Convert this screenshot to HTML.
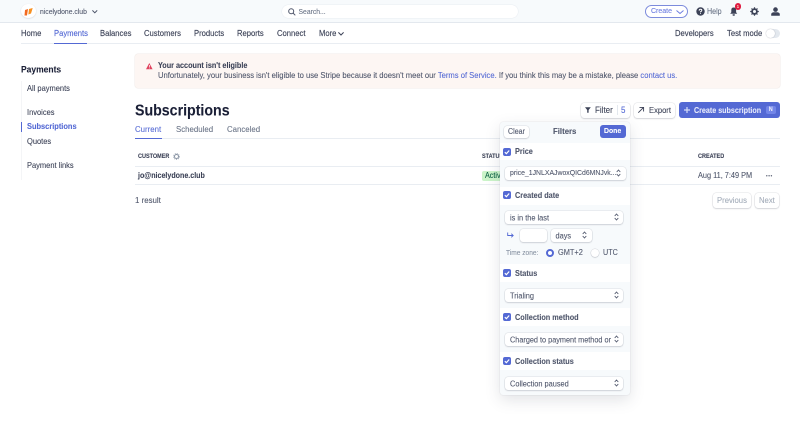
<!DOCTYPE html>
<html><head><meta charset="utf-8"><style>
html,body{margin:0;padding:0;width:800px;height:447px;overflow:hidden;background:#fff}
body{font-family:"Liberation Sans",sans-serif;color:#3c4257;position:relative;font-size:7.6px;filter:blur(.3px)}
.t{position:absolute;white-space:nowrap;line-height:12px;height:12px;transform:scaleY(1.1);-webkit-text-stroke:.08px currentColor}
.n{font-size:7.65px;top:28px;-webkit-text-stroke:.12px currentColor}
.b{position:absolute;box-sizing:border-box}
.btn{position:absolute;box-sizing:border-box;background:#fff;border-radius:3px;box-shadow:0 0 0 .5px rgba(60,66,87,.14),0 1px 1.5px rgba(60,66,87,.16)}
.sel{position:absolute;box-sizing:border-box;background:#fff;border-radius:3px;box-shadow:0 0 0 .5px rgba(60,66,87,.14),0 1px 1.5px rgba(60,66,87,.16);font-size:7.4px;line-height:13px;padding-left:5px;height:13px;white-space:nowrap;overflow:hidden;color:#4f566b}
.sel span{display:inline-block;transform:scaleY(1.1);-webkit-text-stroke:.08px currentColor}
.cb{position:absolute;left:503px;width:8px;height:8px;background:#5469d4;border-radius:2px}
.l{left:515px;font-size:7.3px;font-weight:bold;color:#4f566b}
svg{position:absolute;overflow:visible}
</style></head><body>
<div class="b" style="left:0;top:0;width:800px;height:23px;background:#f7fafc;border-bottom:1px solid #e3e8ee"></div>
<div class="b" style="left:21px;top:4px;width:15px;height:14px;border-radius:50%;background:#fff;box-shadow:0 .5px 1.5px rgba(60,66,87,.2)"></div>
<svg style="left:24px;top:7.5px" width="9" height="8"><path d="M1 2L4 1L3 7.5L.5 7.5Z" fill="#f26a21"/><path d="M5 1L8.7 0L7 5.5L4.3 6.5Z" fill="#f79020"/></svg>
<div class="t" style="left:40px;top:6.5px;font-size:6.8px;color:#4f566b">nicelydone.club</div>
<svg style="left:92px;top:10px" width="6" height="4"><path d="M.4.4L2.8 2.8L5.2.4" fill="none" stroke="#4f566b" stroke-width="1"/></svg>
<div class="b" style="left:282px;top:5px;width:236px;height:13px;background:#fff;border-radius:7px;box-shadow:0 0 0 .5px #e9edf2"></div>
<svg style="left:288px;top:8px" width="8" height="8"><circle cx="3.2" cy="3.2" r="2.5" fill="none" stroke="#4f566b" stroke-width="1"/><path d="M5 5L7.3 7.3" stroke="#4f566b" stroke-width="1"/></svg>
<div class="t" style="left:298.5px;top:6.5px;font-size:6.8px;color:#697386">Search...</div>
<div class="b" style="left:645px;top:5px;width:43px;height:13px;border-radius:7px;background:#fff;border:1px solid #7c8bdc"></div>
<div class="t" style="left:651px;top:6px;font-size:7px;color:#6b7ce0">Create</div>
<svg style="left:676px;top:10px" width="8" height="5"><path d="M.5.5L4 3.5L7.5.5" fill="none" stroke="#6b7ce0" stroke-width="1"/></svg>
<svg style="left:696px;top:7px" width="9" height="9"><circle cx="4.5" cy="4.5" r="4.2" fill="#3c4257"/><path d="M3.2 3.6Q3.2 2.3 4.5 2.3Q5.8 2.3 5.8 3.4Q5.8 4.2 4.5 4.8V5.4M4.5 6.2V7" fill="none" stroke="#fff" stroke-width="1"/></svg>
<div class="t" style="left:707px;top:6px;font-size:7.1px;color:#697386">Help</div>
<svg style="left:730px;top:7px" width="8" height="9"><path d="M3.7 .5Q1.3.5 1.3 3V5.2L.2 6.7H7.2L6.1 5.2V3Q6.1.5 3.7.5Z" fill="#3c4257"/><rect x="2.5" y="7.2" width="2.4" height="1.5" rx=".7" fill="#3c4257"/></svg>
<div class="b" style="left:734.5px;top:3.3px;width:6.7px;height:6.7px;border-radius:50%;background:#df1b41"></div>
<div class="t" style="left:736.8px;top:.7px;font-size:4.2px;color:#ffd">1</div>
<svg style="left:750px;top:7px" width="9" height="9"><circle cx="4.5" cy="4.5" r="2.4" fill="none" stroke="#3c4257" stroke-width="1.8"/><path d="M4.5 .2V1.8M4.5 7.2V8.8M.2 4.5H1.8M7.2 4.5H8.8M1.5 1.5L2.6 2.6M6.4 6.4L7.5 7.5M7.5 1.5L6.4 2.6M2.6 6.4L1.5 7.5" stroke="#3c4257" stroke-width="1.2"/></svg>
<svg style="left:770.5px;top:7px" width="9" height="9"><circle cx="4.5" cy="2.6" r="2.3" fill="#3c4257"/><path d="M.2 8.7V7.2Q.2 5.8 2.6 5.3H6.4Q8.8 5.8 8.8 7.2V8.7Z" fill="#3c4257"/></svg>

<div class="b" style="left:21px;top:43px;width:759px;height:1px;background:#e9edf2"></div>
<div class="t n" style="left:21px">Home</div>
<div class="t n" style="left:54px;color:#5469d4">Payments</div>
<div class="b" style="left:54px;top:43px;width:33px;height:1px;background:#5469d4"></div>
<div class="t n" style="left:100px">Balances</div>
<div class="t n" style="left:144px">Customers</div>
<div class="t n" style="left:194px">Products</div>
<div class="t n" style="left:237px">Reports</div>
<div class="t n" style="left:277px">Connect</div>
<div class="t n" style="left:319px">More</div>
<svg style="left:338px;top:32px" width="6" height="4"><path d="M.4.4L3 3L5.6.4" fill="none" stroke="#3c4257" stroke-width="1"/></svg>
<div class="t n" style="left:675px">Developers</div>
<div class="t n" style="left:727px">Test mode</div>
<div class="b" style="left:766px;top:29px;width:14px;height:9px;border-radius:5px;background:#e3e8ee"></div>
<div class="b" style="left:766px;top:29px;width:9px;height:9px;border-radius:50%;background:#fff;box-shadow:0 0 1px rgba(60,66,87,.5)"></div>

<div class="b" style="left:135px;top:54px;width:645px;height:34px;background:#fdf6f3;border-radius:3px;box-shadow:0 0 0 .5px #f0ebe8"></div>
<svg style="left:145.5px;top:63px" width="7" height="6.5"><path d="M3.3 0L6.6 6.3H0Z" fill="#e0445f"/><rect x="3" y="2" width=".7" height="2.2" fill="#fff"/><rect x="3" y="4.7" width=".7" height=".7" fill="#fff"/></svg>
<div class="t" style="left:158px;top:60px;font-size:7.25px;font-weight:bold;color:#3c4257">Your account isn't eligible</div>
<div class="t" style="left:158px;top:70px;font-size:7.63px;color:#4f566b">Unfortunately, your business isn't eligible to use Stripe because it doesn't meet our <span style="color:#5469d4">Terms of Service.</span> If you think this may be a mistake, please <span style="color:#5469d4">contact us.</span></div>

<div class="t" style="left:21px;top:63px;font-size:8.5px;font-weight:bold;color:#1a1f36">Payments</div>
<div class="b" style="left:21px;top:81px;width:1px;height:99px;background:#f4f5f7"></div>
<div class="t" style="left:27px;top:83px;font-size:7.5px">All payments</div>
<div class="t" style="left:27px;top:107px;font-size:7.5px">Invoices</div>
<div class="b" style="left:21px;top:122px;width:1px;height:10px;background:#5469d4"></div>
<div class="t" style="left:27px;top:121px;font-size:7.45px;font-weight:bold;color:#5469d4">Subscriptions</div>
<div class="t" style="left:27px;top:136px;font-size:7.5px">Quotes</div>
<div class="t" style="left:27px;top:160px;font-size:7.5px">Payment links</div>

<div class="t" style="left:135px;top:104.5px;font-size:14.2px;font-weight:bold;color:#1a1f36">Subscriptions</div>
<div class="t" style="left:135px;top:124px;font-size:7.85px;color:#5469d4">Current</div>
<div class="t" style="left:176px;top:124px;font-size:7.85px;color:#697386">Scheduled</div>
<div class="t" style="left:227px;top:124px;font-size:7.85px;color:#697386">Canceled</div>
<div class="b" style="left:135px;top:138px;width:645px;height:1px;background:#e9edf2"></div>
<div class="b" style="left:135px;top:138px;width:27px;height:1px;background:#5469d4"></div>
<div class="t" style="left:138px;top:151px;font-size:5.5px;font-weight:bold;color:#3c4257">CUSTOMER</div>
<svg style="left:173px;top:153px" width="7" height="7"><circle cx="3.5" cy="3.5" r="2" fill="none" stroke="#8792a2" stroke-width="1"/><circle cx="3.5" cy="3.5" r="3" fill="none" stroke="#8792a2" stroke-width=".7" stroke-dasharray="1 1"/></svg>
<div class="t" style="left:482px;top:151px;font-size:5.5px;font-weight:bold;color:#3c4257">STATUS</div>
<div class="t" style="left:698px;top:151px;font-size:5.5px;font-weight:bold;color:#3c4257">CREATED</div>
<div class="b" style="left:135px;top:166px;width:645px;height:1px;background:#e9edf2"></div>
<div class="b" style="left:135px;top:184px;width:645px;height:1px;background:#e9edf2"></div>
<div class="t" style="left:138px;top:170px;font-size:7.1px;font-weight:bold;color:#3c4257">jo@nicelydone.club</div>
<div class="b" style="left:482px;top:171px;width:30px;height:10px;background:#cbf4c9;border-radius:2px"></div>
<div class="t" style="left:485px;top:170px;font-size:7.2px;color:#0e6245">Active</div>
<div class="t" style="left:698px;top:170px;font-size:7.35px;color:#4f566b">Aug 11, 7:49 PM</div>
<svg style="left:765.5px;top:175px" width="7" height="2"><circle cx=".8" cy=".8" r=".7" fill="#4f566b"/><circle cx="3.1" cy=".8" r=".7" fill="#4f566b"/><circle cx="5.4" cy=".8" r=".7" fill="#4f566b"/></svg>
<div class="t" style="left:135px;top:195px;font-size:7.9px;color:#4f566b">1 result</div>
<div class="btn" style="left:713px;top:193px;width:38px;height:15px"></div>
<div class="t" style="left:717px;top:195px;font-size:7.7px;color:#a3acb9">Previous</div>
<div class="btn" style="left:755px;top:193px;width:24px;height:15px"></div>
<div class="t" style="left:759px;top:195px;font-size:7.7px;color:#a3acb9">Next</div>

<div class="btn" style="left:581px;top:102.5px;width:49px;height:15px"></div>
<svg style="left:585px;top:107px" width="6" height="6"><path d="M0 .3H5.8L3.6 3V5.7H2.2V3Z" fill="#3c4257"/></svg>
<div class="t" style="left:595px;top:104.6px;font-size:8px">Filter</div>
<div class="b" style="left:617px;top:105px;width:1px;height:10px;background:#e3e8ee"></div>
<div class="t" style="left:621px;top:104.6px;font-size:8px;color:#5469d4">5</div>
<div class="btn" style="left:633.5px;top:102.5px;width:41.5px;height:15px"></div>
<svg style="left:638px;top:107px" width="6" height="6"><path d="M.3 5.7L5.4.6M1.5.4H5.6V4.5" fill="none" stroke="#3c4257" stroke-width=".9"/></svg>
<div class="t" style="left:649px;top:104.6px;font-size:7.6px">Export</div>
<div class="b" style="left:679px;top:102px;width:101px;height:16px;background:#5469d4;border-radius:3px"></div>
<svg style="left:684px;top:107px" width="6" height="6"><path d="M3 0V6M0 3H6" stroke="#d5dcf7" stroke-width="1.2"/></svg>
<div class="t" style="left:694px;top:104.6px;font-size:7.15px;color:#e6e9fb;font-weight:bold">Create subscription</div>
<div class="b" style="left:766px;top:105.5px;width:9.5px;height:8.5px;background:#7285e8;border-radius:2px"></div>
<div class="t" style="left:768.7px;top:104px;font-size:5.5px;color:#e6e9fb;font-weight:bold">N</div>

<div class="b" style="left:500px;top:122px;width:129.5px;height:273px;background:#f7fafc;border-radius:3px;box-shadow:0 0 0 .5px rgba(60,66,87,.08),0 5px 15px rgba(60,66,87,.15)"></div>
<div class="btn" style="left:504px;top:125.5px;width:25px;height:12px"></div>
<div class="t" style="left:508px;top:126px;font-size:7.1px;color:#4f566b">Clear</div>
<div class="t" style="left:553px;top:126px;font-size:7.8px;color:#4f566b;font-weight:bold">Filters</div>
<div class="b" style="left:600px;top:125px;width:26px;height:13px;background:#5469d4;border-radius:3px"></div>
<div class="t" style="left:604px;top:126px;font-size:6.9px;color:#fff;font-weight:bold">Done</div>

<div class="b" style="left:500px;top:143px;width:129.5px;height:17px;background:#fff"></div>
<div class="b" style="left:500px;top:187px;width:129.5px;height:18px;background:#fff"></div>
<div class="b" style="left:500px;top:264px;width:129.5px;height:18px;background:#fff"></div>
<div class="b" style="left:500px;top:308px;width:129.5px;height:18px;background:#fff"></div>
<div class="b" style="left:500px;top:352px;width:129.5px;height:18px;background:#fff"></div>

<svg width="0" height="0"><defs><symbol id="k" viewBox="0 0 8 8"><path d="M1.8 4.2L3.4 5.7L6.2 2.5" fill="none" stroke="#fff" stroke-width="1.2"/></symbol><symbol id="u" viewBox="0 0 5 8"><path d="M.7 3L2.5 1L4.3 3M.7 5L2.5 7L4.3 5" fill="none" stroke="#4f566b" stroke-width=".9"/></symbol></defs></svg>

<div class="cb" style="top:147.5px"></div><svg style="left:503px;top:147.5px" width="8" height="8"><use href="#k"/></svg>
<div class="t l" style="top:146px">Price</div>
<div class="sel" style="left:505px;top:167px;width:121px;font-size:6.9px"><span>price_1JNLXAJwoxQICd6MNJvk...</span></div>
<svg style="left:616px;top:169px" width="5" height="8"><use href="#u"/></svg>

<div class="cb" style="top:191px"></div><svg style="left:503px;top:191px" width="8" height="8"><use href="#k"/></svg>
<div class="t l" style="top:190px">Created date</div>
<div class="sel" style="left:505px;top:211px;width:118px"><span>is in the last</span></div>
<svg style="left:614px;top:213px" width="5" height="8"><use href="#u"/></svg>
<svg style="left:507px;top:232px" width="7" height="6"><path d="M.7.5V3.5H6M4.3 1.7L6.2 3.5L4.3 5.3" fill="none" stroke="#5469d4" stroke-width=".9"/></svg>
<div class="sel" style="left:520px;top:228.5px;width:27px"></div>
<div class="sel" style="left:550.5px;top:228.5px;width:41.5px"><span>days</span></div>
<svg style="left:582px;top:231px" width="5" height="8"><use href="#u"/></svg>
<div class="t" style="left:506px;top:247.6px;font-size:6.6px;color:#8792a2">Time zone:</div>
<div class="b" style="left:546px;top:249px;width:8px;height:8px;border-radius:50%;background:#fff;border:2.6px solid #5469d4"></div>
<div class="t" style="left:558px;top:247px;font-size:7.4px;color:#4f566b">GMT+2</div>
<div class="b" style="left:591px;top:249px;width:8px;height:8px;border-radius:50%;background:#fff;box-shadow:0 0 0 .5px rgba(60,66,87,.2),0 1px 1px rgba(60,66,87,.12)"></div>
<div class="t" style="left:603px;top:247px;font-size:7.2px;color:#4f566b">UTC</div>

<div class="cb" style="top:269px"></div><svg style="left:503px;top:269px" width="8" height="8"><use href="#k"/></svg>
<div class="t l" style="top:268px">Status</div>
<div class="sel" style="left:505px;top:289px;width:118px"><span>Trialing</span></div>
<svg style="left:614px;top:291px" width="5" height="8"><use href="#u"/></svg>

<div class="cb" style="top:313px"></div><svg style="left:503px;top:313px" width="8" height="8"><use href="#k"/></svg>
<div class="t l" style="top:312px">Collection method</div>
<div class="sel" style="left:505px;top:333px;width:118px;font-size:7.3px"><span>Charged to payment method or</span></div>
<svg style="left:614px;top:335px" width="5" height="8"><use href="#u"/></svg>

<div class="cb" style="top:357px"></div><svg style="left:503px;top:357px" width="8" height="8"><use href="#k"/></svg>
<div class="t l" style="top:356px">Collection status</div>
<div class="sel" style="left:505px;top:377px;width:118px"><span>Collection paused</span></div>
<svg style="left:614px;top:379px" width="5" height="8"><use href="#u"/></svg>
</body></html>
